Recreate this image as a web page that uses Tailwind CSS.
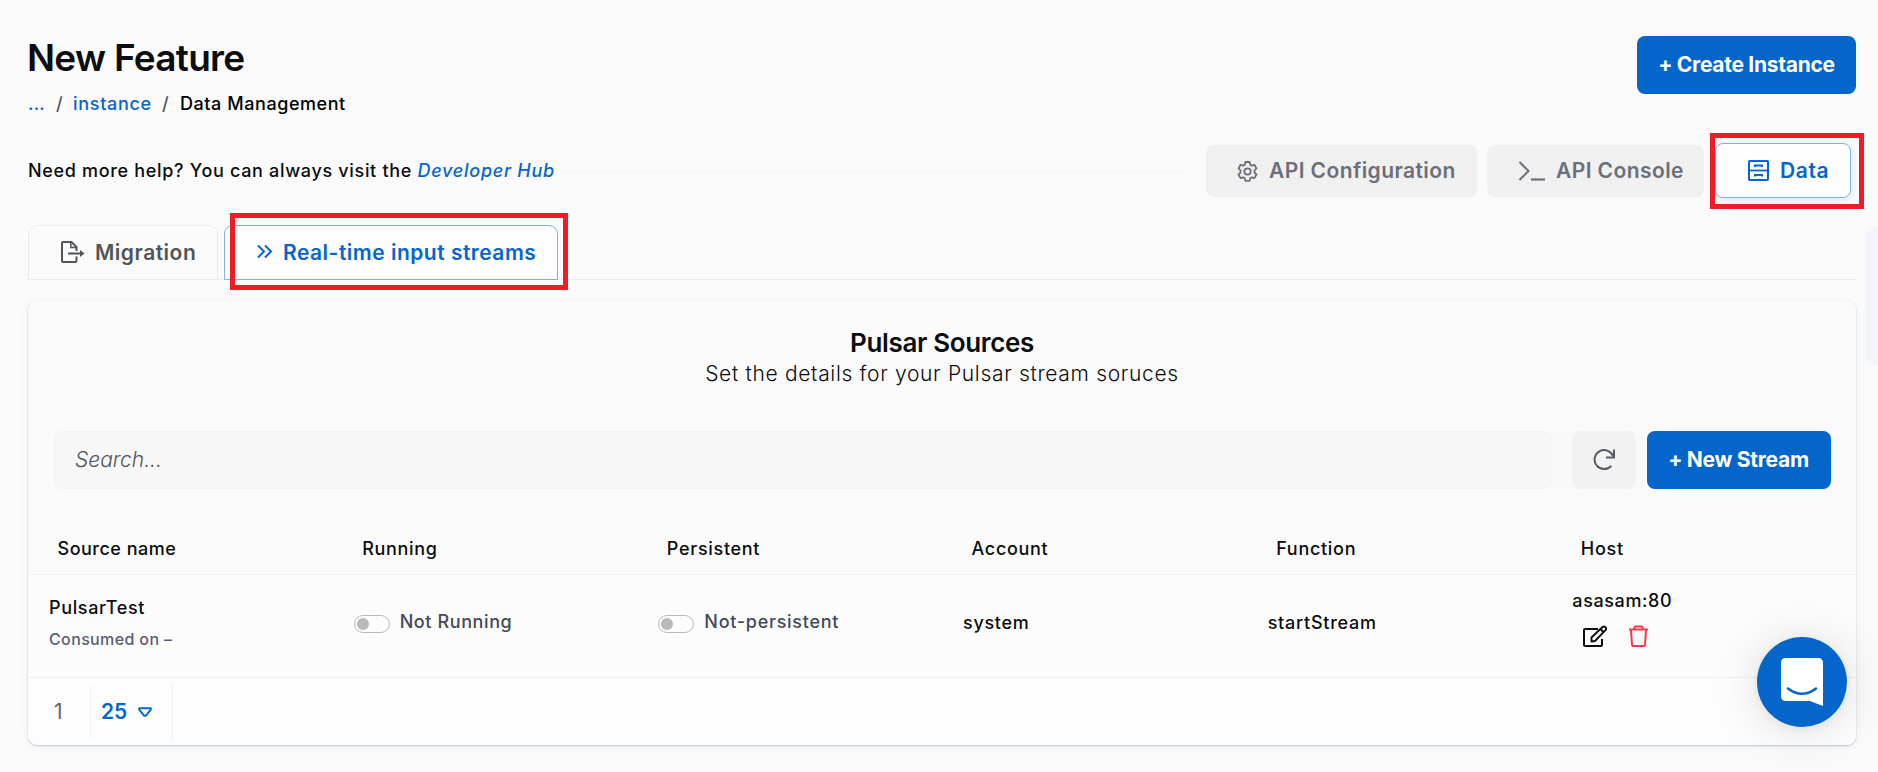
<!DOCTYPE html>
<html lang="en">
<head>
<meta charset="utf-8">
<title>Data Management</title>
<script src="https://cdn.jsdelivr.net/npm/@tailwindcss/browser@4"></script>
</head>
<body class="relative h-[772px] w-[1878px] overflow-hidden bg-[#fafafa] pl-7 pr-[22px] pt-9 text-[18px] font-medium tracking-[0.7px] text-[#0c0d0e]" style="font-family:Inter,'Liberation Sans',sans-serif">

<header class="flex h-[107px] justify-between">
  <div class="flex flex-col">
    <h1 class="-ml-px h-[43px] text-[37px] leading-[43px] font-semibold tracking-[-0.72px]">New Feature</h1>
    <nav class="mt-[13px] flex h-6 items-center leading-6">
      <a class="w-7 tracking-[0.2px] text-[#0664ca]">...</a>
      <span class="w-[17px] text-[#50555c]">/</span>
      <a class="w-[89px] tracking-[0.7px] text-[#0664ca]">instance</a>
      <span class="w-[18px] text-[#50555c]">/</span>
      <span class="tracking-[0.56px] text-black">Data Management</span>
    </nav>
  </div>
  <button class="h-[58px] w-[219px] rounded-lg bg-[#0466ca] text-[21px] font-bold tracking-[-0.28px] whitespace-nowrap text-white">+ Create Instance</button>
</header>

<section class="flex h-14 items-center">
  <p class="w-[527px] pb-px whitespace-nowrap tracking-[0.68px]">Need more help? You can always visit the <a class="tracking-[0.75px] text-[#0466ca] italic">Developer Hub</a></p>
  <div class="h-px w-[633px] bg-[#f3f3f3]"></div>
  <div class="ml-[18px] flex items-center text-[21px] font-semibold tracking-[0.42px] whitespace-nowrap text-[#6b6f7a]">
    <button class="flex h-[52px] w-[271px] items-center rounded-lg bg-[#f0f0f0] pl-[31px]">
      <svg class="mr-[11px] size-[21px]" viewBox="0 0 21 21" fill="none" stroke="currentColor" stroke-width="1.8" stroke-linejoin="round"><path d="M8.400 1h4.200l.6 2.700 1.600.9 2.600-.8 2.100 3.600-2 1.900v2.300l2 1.900-2.100 3.600-2.600-.8-1.600.9-.6 2.700H8.400l-.6-2.700-1.600-.9-2.600.8-2.100-3.600 2-1.900V9.300l-2-1.900 2.100-3.600 2.600.8 1.600-.9z"/><circle cx="10.500" cy="10.500" r="3.200"/></svg>
      API Configuration
    </button>
    <button class="ml-2.5 flex h-[52px] w-[217px] items-center rounded-lg bg-[#f0f0f0] pl-[31px]">
      <svg class="mr-[11px] h-[26px] w-[27px]" viewBox="0 0 27 26" fill="none" stroke="currentColor" stroke-width="2"><path d="M1.500 4l9 9-9 9"/><path d="M13 21.500h14" stroke-width="2.200"/></svg>
      API Console
    </button>
    <button class="mb-[2px] ml-[11px] flex h-[55px] w-[136px] items-center rounded-lg border border-[#7fb0e2] bg-[#fdfdfd] pt-px pl-8 tracking-[0.6px] text-[#0664ca] shadow-[0_2px_10px_rgba(4,102,202,0.14)]">
      <svg class="mr-[11px] size-[21px]" viewBox="0 0 21 21" fill="none" stroke="currentColor" stroke-width="2"><rect x="1" y="1" width="19" height="19" rx="0.8"/><path d="M1 10.500h19" stroke-width="1.800"/><path d="M6.900 7V5.500h7.200V7M6.900 16.500V15h7.200v1.500" stroke-width="1.800"/></svg>
      Data
    </button>
  </div>
</section>

<div class="mt-[26px] flex h-[55px] items-stretch border-b border-[#ebebeb] text-[21px] font-semibold whitespace-nowrap">
  <div class="flex h-[54px] w-[190px] items-center rounded-t-[9px] border border-b-0 border-[#ebebec] pl-8 tracking-[0.5px] text-[#50555c]">
    <svg class="mr-[10px] h-[23px] w-[24px]" viewBox="0 0 24 23" fill="none" stroke="currentColor" stroke-width="2"><path d="M15.500 15.500V20q0 1-1 1H2q-1 0-1-1V2q0-1 1-1h8.500l5 5v4"/><path d="M9.800 1v5.500h5.700" stroke-width="1.500"/><path d="M7 12.500h14" /><path d="M19 9l4.500 3.500L19 16z" fill="currentColor" stroke="none"/></svg>
    Migration
  </div>
  <div class="ml-1.5 flex h-[55px] w-[334px] items-center rounded-t-[9px] border border-[#7fb0e2] bg-[#fdfdfd] pl-8 tracking-[0.5px] text-[#0664ca]">
    <svg class="mr-[10px] h-[15px] w-[16px] -translate-y-px" viewBox="0 0 16 15" fill="none" stroke="currentColor" stroke-width="2"><path d="M1 1.500l6 6-6 6M8 1.500l6 6-6 6"/></svg>
    Real-time input streams
  </div>
</div>

<main class="mt-[21px] flex h-[444px] flex-col overflow-hidden rounded-[9px] bg-[#fafafa] shadow-[0_1px_2px_rgba(40,70,110,0.28),0_0_10px_rgba(60,100,200,0.05)]">
  <div class="flex flex-col items-center pt-[26px]">
    <h2 class="h-8 text-[26px] leading-8 font-semibold tracking-[-0.35px]">Pulsar Sources</h2>
    <p class="h-[29px] text-[21px] leading-[29px] font-light tracking-[0.68px]">Set the details for your Pulsar stream soruces</p>
  </div>
  <div class="mt-[43px] mr-[25px] ml-[26px] flex h-[58px] shrink-0">
    <div class="flex flex-1 rounded-l-lg bg-[#f9f9f9]">
      <div class="flex w-[1497px] items-center rounded-lg border border-[#f2f2f2] bg-[#f7f7f7] pl-[20px] text-[21px] font-light tracking-normal text-[#50555c] italic">Search...</div>
      <button class="ml-[21px] flex w-16 items-center justify-center rounded-lg bg-[#f2f2f2] text-[#555a66]">
        <svg class="size-[23px] -translate-y-px" viewBox="0 0 23 23" fill="none" stroke="currentColor" stroke-width="2"><path d="M18.300 17.800a9.500 9.500 0 1 1 1.700-9.600"/><path d="M21 1.500v8h-8"/></svg>
      </button>
    </div>
    <button class="w-[184px] rounded-lg bg-[#0466ca] pr-px text-[21px] font-bold tracking-[-0.26px] text-white">+ New Stream</button>
  </div>

  <div class="mt-6 grid h-[62px] shrink-0 grid-cols-6 items-center border-b border-[#f0f0f0] pt-[9px] *:pl-[29.500px]">
    <div class="tracking-[0.5px]">Source name</div><div>Running</div><div>Persistent</div><div>Account</div><div>Function</div><div>Host</div>
  </div>

  <div class="grid h-[95px] shrink-0 grid-cols-6 bg-[#fcfcfc] leading-6 *:pl-[21px]">
    <div class="pt-[21px]">
      <div class="tracking-[0.65px]">PulsarTest</div>
      <div class="mt-[7px] text-[16px] tracking-[0.37px] text-[#595e70]">Consumed on –</div>
    </div>
    <div class="flex gap-[10px] pt-[35px] tracking-[0.6px] text-[#44495a]">
      <span class="mt-[5px] flex h-[18px] w-9 items-center rounded-full border border-[#b9b9b9] pl-[2px]"><i class="size-3 rounded-full bg-[#b9b9b9]"></i></span>Not Running
    </div>
    <div class="flex gap-[10px] pt-[35px] tracking-[0.72px] text-[#44495a]">
      <span class="mt-[5px] flex h-[18px] w-9 items-center rounded-full border border-[#b9b9b9] pl-[2px]"><i class="size-3 rounded-full bg-[#b9b9b9]"></i></span>Not-persistent
    </div>
    <div class="pt-9">system</div>
    <div class="pt-9 tracking-[0.75px]">startStream</div>
    <div class="pt-3.5">
      <div class="tracking-[0.6px]">asasam:80</div>
      <div class="mt-3 flex">
        <svg class="ml-[11px] h-[23px] w-[26px]" viewBox="0 0 26 23" fill="none" stroke="currentColor" stroke-width="2" stroke-linejoin="round"><path d="M15 4H2q-1 0-1 1v15q0 1 1 1H18q1 0 1-1V14"/><path d="M8.500 16.500v-4L19.500 2q1.500-1.200 3 .200 1.300 1.500 0 3L12 16z" stroke-width="1.900"/><path d="M17.500 4l3 3.200"/></svg>
        <svg class="ml-[20px] h-[23px] w-[20px] text-[#f5384a]" viewBox="0 0 20 23" fill="none" stroke="currentColor" stroke-width="2" stroke-linejoin="round"><path d="M0 4.500h19M5 4.500q.2-3 1.500-3h6q1.300 0 1.500 3M2 5l1 15q.1 1 1 1h11q.9 0 1-1L17 5"/></svg>
      </div>
    </div>
  </div>

  <div class="flex flex-1 flex-col bg-[#fdfdfd]">
    <div class="h-2 shrink-0 border-b border-[#f0f0f0]"></div>
    <div class="flex h-[68px] py-[7px] text-[21px] leading-[54px] tracking-normal">
      <div class="w-[63px] border-r border-[#f0f0f0] pl-[26px] font-normal text-[#666]">1</div>
      <div class="flex w-[82px] items-center border-r border-[#f0f0f0] pl-[10px] font-semibold text-[#0466ca]">25
        <svg class="ml-[11px] h-[10px] w-[14px]" viewBox="0 0 14 10" fill="none" stroke="currentColor" stroke-width="1.900" stroke-linejoin="round"><path d="M1.200 1.200h11.600v1.500L8.300 8.200q-1.300 1.200-2.600 0L1.200 2.700z"/></svg>
      </div>
    </div>
  </div>
</main>

<aside class="absolute top-[226px] left-[1865px] h-[140px] w-6 rounded-lg bg-[#f2f5fa]"></aside>
<div class="absolute top-[213px] left-[230px] h-[77px] w-[338px] border-[5px] border-[#ee1c24]"></div>
<div class="absolute top-[133px] left-[1710px] h-[76px] w-[154px] border-[5px] border-[#ee1c24]"></div>
<button class="absolute top-[637px] left-[1757px] flex size-[90px] items-center justify-center rounded-full bg-[#0466ca] shadow-[0_2px_9px_rgba(0,0,0,0.06),0_3px_48px_rgba(0,0,0,0.13)]">
  <svg class="h-12 w-[42px]" viewBox="0 0 42 48"><path d="M5 0h32q5 0 5 5v43q-8-3-13-5H5q-5 0-5-5V5q0-5 5-5z" fill="#fff"/><path d="M7 30.500q14 10.500 28 0" fill="none" stroke="#0466ca" stroke-width="2.600" stroke-linecap="round"/></svg>
</button>
</body>
</html>
